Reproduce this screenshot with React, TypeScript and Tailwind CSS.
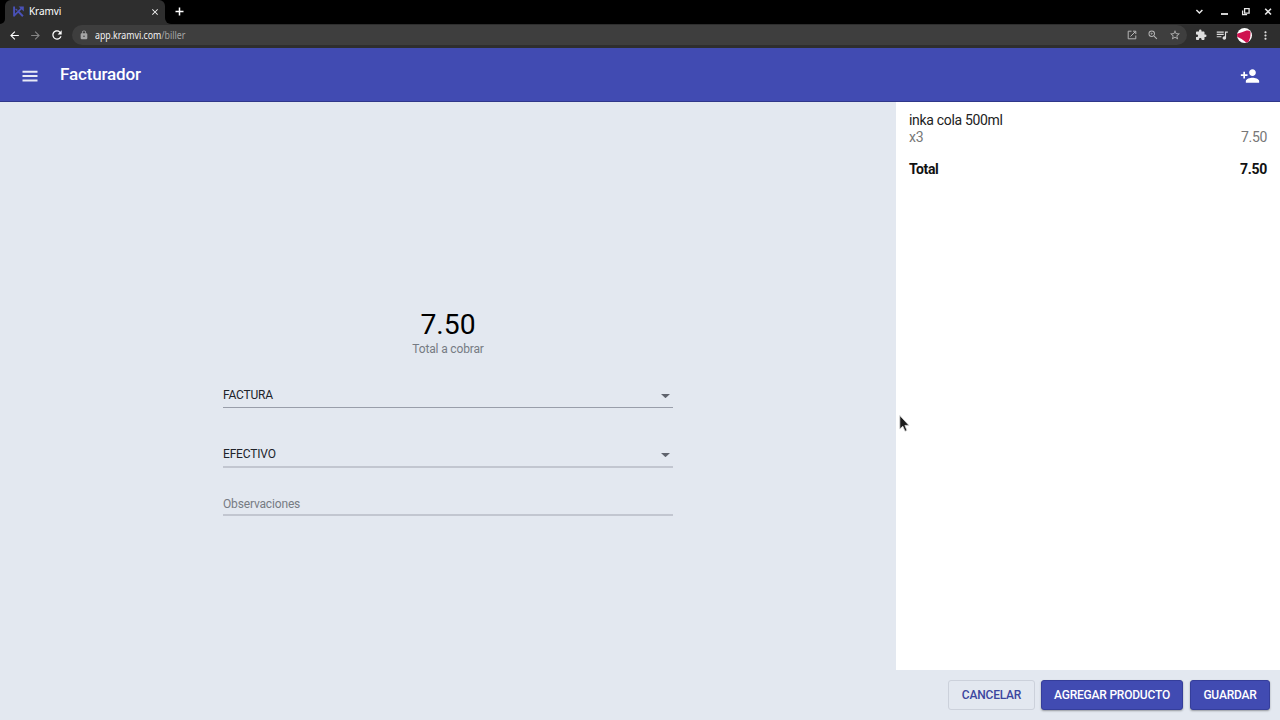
import type { ReactNode } from 'react';
import {
  MdArrowBack,
  MdArrowForward,
  MdClose,
  MdExtension,
  MdLock,
  MdMoreVert,
  MdOutlineQueueMusic,
  MdPersonAdd,
  MdRefresh,
  MdStarBorder,
  MdZoomIn,
} from 'react-icons/md';

function Logo() {
  return (
    <svg className="h-[11px] w-[11px]" viewBox="0 0 11 11" fill="none" stroke="#4a52b8">
      <path d="M1.1 0.5V10.5" strokeWidth="1.9" />
      <path d="M1.4 9.4L8.8 2" strokeWidth="1.7" />
      <path d="M5.4 5.6L9.9 10.2" strokeWidth="2" />
      <path d="M2.6 2.9L4.4 4.4" strokeWidth="1.3" />
      <path d="M5.6 0.4H10.8V5.4Z" fill="#4a52b8" stroke="none" />
    </svg>
  );
}

function TabStrip() {
  return (
    <div className="flex h-6 bg-black text-white">
      <div className="flex w-[5px] items-end bg-[#2e2e2e]">
        <div className="h-full w-full rounded-br-md bg-black" />
      </div>
      <div className="flex w-[160px] items-center rounded-t-md bg-[#2e2e2e] pb-[2px] pl-2">
        <Logo />
        <span className="ml-[5px] font-['Noto_Sans',sans-serif] text-[10px] leading-3 tracking-[-0.1px]">Kramvi</span>
        <MdClose className="mt-px mr-[5px] ml-auto h-[10px] w-[10px]" />
      </div>
      <div className="w-[6px] bg-[#2e2e2e]">
        <div className="h-full w-full rounded-bl-md bg-black" />
      </div>
      <svg className="mt-[7px] ml-[4px] h-[9px] w-[9px]" viewBox="0 0 9 9" stroke="white" strokeWidth="1.5">
        <path d="M4.5 0.5V8.5M0.5 4.5H8.5" />
      </svg>
      <div className="ml-auto flex items-center pr-2">
        <svg className="h-6 w-[78px]" viewBox="0 0 78 24" fill="none" stroke="#e8e8e8" strokeWidth="1.3">
          <path d="M2.4 10L5.4 13L8.4 10" strokeWidth="1.5" />
          <path d="M27 14H34" strokeWidth="1.8" />
          <path d="M50.6 8.7H55.1V13.2H50.6Z" />
          <path d="M48.6 10.5V14.7H53.1" />
          <path d="M71.2 8.7L77 14.5M77 8.7L71.2 14.5" strokeWidth="1.6" />
        </svg>
      </div>
    </div>
  );
}

function Toolbar() {
  return (
    <div className="flex h-6 items-center bg-[#2e2e2e] pb-[2px] pl-2 text-white">
      <MdArrowBack className="h-[13px] w-[13px]" />
      <MdArrowForward className="ml-2 h-[13px] w-[13px] text-[#858585]" />
      <MdRefresh className="ml-2 h-[14px] w-[14px]" />
      <div className="ml-2 flex h-5 w-[1115px] items-center rounded-full bg-[#3e3e3e] pr-[6px] pl-[7px]">
        <MdLock className="h-[10px] w-[10px] text-[#a5a5a5]" />
        <span className="ml-[6px] inline-block origin-left scale-x-[0.88] font-['Noto_Sans',sans-serif] text-[10px] leading-3 text-[#f2f2f2]">
          app.kramvi.com<span className="text-[#a5a5a5]">/biller</span>
        </span>
        <div className="ml-auto flex items-center gap-[10px] text-[#b5b5b5]">
          <svg className="h-[10px] w-[10px]" viewBox="0 0 10 10" fill="none" stroke="currentColor">
            <path d="M4.5 1.2H1.2V8.8H8.8V5.5M3.5 6.5L8.5 1.5M6 1.2H8.8V4" />
          </svg>
          <MdZoomIn className="h-[12px] w-[12px]" />
          <MdStarBorder className="h-[12px] w-[12px]" />
        </div>
      </div>
      <MdExtension className="ml-2 h-[12px] w-[12px] text-[#dedede]" />
      <MdOutlineQueueMusic className="ml-[8px] h-[14px] w-[14px] text-[#dedede]" />
      <svg className="ml-[8px] h-[15px] w-[15px]" viewBox="0 0 15 15">
        <circle cx="7.5" cy="7.5" r="7.5" fill="#fff" />
        <path d="M0 5.8Q5 4.4 9.5 2.6Q13 1.8 13.6 4.5Q13.9 8.5 11.8 13.6L9.5 14.8Q5.5 10.8 0.2 8.8Z" fill="#cf1250" />
      </svg>
      <MdMoreVert className="ml-[7px] h-[13px] w-[13px] text-[#dedede]" />
    </div>
  );
}

function Header() {
  return (
    <header className="flex h-[54px] items-center border-b border-[#303789] bg-[#414bb2] pr-5 pl-5 text-white">
      <svg className="mt-[3px] h-5 w-5" viewBox="0 0 20 20" stroke="#e8eaf6" strokeWidth="2">
        <path d="M2.5 5.7H17.5M2.5 10.1H17.5M2.5 14.5H17.5" />
      </svg>
      <h1 className="mb-px ml-5 text-[17px] leading-6 font-medium tracking-[-0.16px]">Facturador</h1>
      <MdPersonAdd className="mt-[3px] ml-auto h-5 w-5" />
    </header>
  );
}

function SelectField({ value, line }: { value: string; line: ReactNode }) {
  return (
    <div>
      <div className="flex h-[17px] items-center justify-between pr-[3px] text-[12px] leading-[16px] tracking-[-0.18px] text-[#20232a]">
        <span className="h-[17px]">{value}</span>
        <svg className="h-[4px] w-[9px]" viewBox="0 0 9 4">
          <path d="M0 0H9L4.5 4.2Z" fill="#5f636d" />
        </svg>
      </div>
      {line}
    </div>
  );
}

function Payment() {
  return (
    <main className="flex w-[896px] flex-col items-center bg-[#e3e8f0] pt-[206px]">
      <div className="text-[28.3px] leading-[34px] text-black">7.50</div>
      <div className="text-[12px] leading-[15px] tracking-[-0.15px] text-[#767b83]">Total a cobrar</div>
      <div className="mt-[30px] w-[450px]">
        <SelectField value="FACTURA" line={<div className="mt-[3px] h-px bg-[#999eaa]" />} />
        <div className="h-[38px]" />
        <SelectField value="EFECTIVO" line={<div className="mt-[3px] h-[2px] bg-[#c2c6d0]" />} />
        <div className="mt-[28px] h-[16px] text-[12px] leading-[16px] tracking-[-0.16px] text-[#767b83]">
          Observaciones
        </div>
        <div className="mt-[2px] h-[2px] bg-[#c2c6d0]" />
      </div>
    </main>
  );
}

function Sidebar() {
  return (
    <aside className="flex flex-1 flex-col">
      <div className="h-[568px] bg-white px-[13px] pt-[10px] text-[14px] leading-[17px] tracking-[-0.32px]">
        <div className="text-[#222]">inka cola 500ml</div>
        <div className="flex justify-between text-[#777]">
          <span>x3</span>
          <span>7.50</span>
        </div>
        <div className="mt-[15px] flex justify-between font-bold text-[#111]">
          <span className="tracking-[-0.4px]">Total</span>
          <span>7.50</span>
        </div>
      </div>
      <div className="flex h-[50px] items-start justify-end gap-[7px] bg-[#e3e8f0] pt-[10px] pr-[10px] text-[12px] font-medium tracking-[-0.21px]">
        <button className="-mr-px h-[30px] w-[87px] rounded-[3px] border border-[#ccd1db] pb-px text-[#3c469f]">
          CANCELAR
        </button>
        <button className="h-[30px] w-[142px] rounded-[3px] border border-[#353e9b] bg-[#414bb2] pb-px whitespace-nowrap text-white shadow-[0_1px_2px_rgba(0,0,0,0.35)]">
          AGREGAR PRODUCTO
        </button>
        <button className="h-[30px] w-[80px] rounded-[3px] border border-[#353e9b] bg-[#414bb2] pb-px text-white shadow-[0_1px_2px_rgba(0,0,0,0.35)]">
          GUARDAR
        </button>
      </div>
    </aside>
  );
}

export default function App() {
  return (
    <div className="relative flex h-[720px] w-[1280px] flex-col overflow-hidden font-[Roboto,sans-serif]">
      <TabStrip />
      <Toolbar />
      <Header />
      <div className="flex flex-1">
        <Payment />
        <Sidebar />
      </div>
      <svg className="absolute top-[414px] left-[898px] h-[20px] w-[14px]" viewBox="0 0 14 20">
        <path
          d="M1.8 1.5V15L4.8 12.2L7 17.3L9 16.4L6.9 11.4H11Z"
          fill="#1c1c1c"
          stroke="#ddd"
          strokeWidth="0.8"
        />
      </svg>
    </div>
  );
}
